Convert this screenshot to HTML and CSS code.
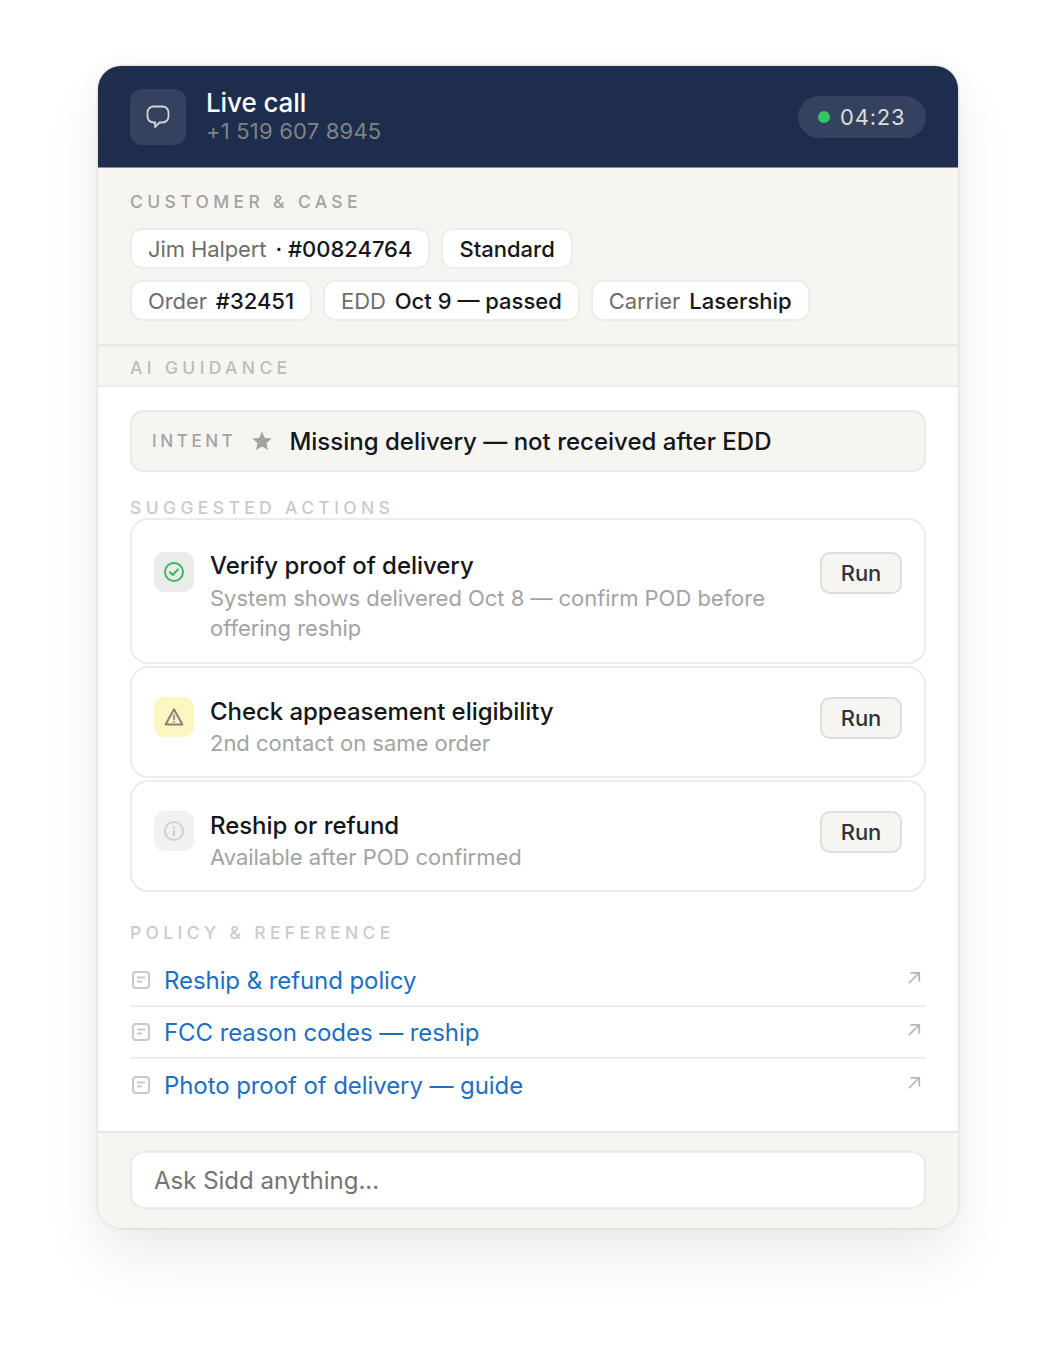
FILE: index.html
```html
<!DOCTYPE html>
<html>
<head>
    <title>Live call</title>
    <link rel="stylesheet" href="styles.css">
</head>
<body>
    <div class="card">
        <div class="header">
            <div class="header-icon">
                <svg width="26" height="26" viewBox="0 0 26 26" fill="none" stroke="#d4d4d0" stroke-width="1.8" stroke-linejoin="round"><path d="M8.5 2.5h9a6 6 0 0 1 6 6v4a6 6 0 0 1-6 6h-3l-4.5 4.5.2-4.5H8.5a6 6 0 0 1-6-6v-4a6 6 0 0 1 6-6z"/></svg>
            </div>
            <div class="header-text">
                <div class="header-title">Live call</div>
                <div class="header-phone">+1 519 607 8945</div>
            </div>
            <div class="timer"><span class="timer-dot"></span>04:23</div>
        </div>

        <div class="customer">
            <div class="label label-dark">CUSTOMER &amp; CASE</div>
            <div class="chips">
                <div class="chip"><span class="muted">Jim Halpert</span><b>· #00824764</b></div>
                <div class="chip"><b>Standard</b></div>
            </div>
            <div class="chips">
                <div class="chip"><span class="muted">Order</span><b>#32451</b></div>
                <div class="chip"><span class="muted">EDD</span><b>Oct 9 — passed</b></div>
                <div class="chip"><span class="muted">Carrier</span><b>Lasership</b></div>
            </div>
        </div>

        <div class="guidance-strip">
            <div class="label label-mid">AI GUIDANCE</div>
        </div>

        <div class="main">
            <div class="intent">
                <span class="intent-label">INTENT</span>
                <svg class="intent-star" width="22" height="22" viewBox="0 0 22 22" fill="#a3a3a0"><path d="M11 1.5l2.8 6.4 6.9.7-5.2 4.6 1.5 6.8L11 16.5l-6 3.5 1.5-6.8L1.3 8.6l6.9-.7z"/></svg>
                <span class="intent-text">Missing delivery — not received after EDD</span>
            </div>

            <div class="label label-light actions-label">SUGGESTED ACTIONS</div>
            <div class="action action-first">
                <div class="action-icon icon-green">
                    <svg width="22" height="22" viewBox="0 0 22 22" fill="none" stroke="#34b864" stroke-width="2" stroke-linecap="round" stroke-linejoin="round"><circle cx="11" cy="11" r="9"/><path d="M7 11.3l2.8 2.7L15 8.4"/></svg>
                </div>
                <div class="action-text">
                    <div class="action-title">Verify proof of delivery</div>
                    <div class="action-sub">System shows delivered Oct 8 — confirm POD before offering reship</div>
                </div>
                <div class="run">Run</div>
            </div>
            <div class="action">
                <div class="action-icon icon-yellow">
                    <svg width="22" height="22" viewBox="0 0 22 22" fill="none" stroke="#84827a" stroke-width="2" stroke-linejoin="round"><path d="M11 3.2L19.4 18.6H2.6z"/><path d="M11 8.5v5.4M11 15v1.6" stroke-width="1.6"/></svg>
                </div>
                <div class="action-text">
                    <div class="action-title">Check appeasement eligibility</div>
                    <div class="action-sub">2nd contact on same order</div>
                </div>
                <div class="run">Run</div>
            </div>
            <div class="action">
                <div class="action-icon icon-grey">
                    <svg width="22" height="22" viewBox="0 0 22 22" fill="none" stroke="#cfd0d0" stroke-width="2"><circle cx="11" cy="11" r="9"/><path d="M11 10v6M11 6.4v2" stroke="#c4c5c5" stroke-width="1.7"/></svg>
                </div>
                <div class="action-text">
                    <div class="action-title">Reship or refund</div>
                    <div class="action-sub">Available after POD confirmed</div>
                </div>
                <div class="run">Run</div>
            </div>

            <div class="label label-light policy-label">POLICY &amp; REFERENCE</div>
            <div class="links">
                <div class="link">
                    <svg class="link-doc" width="20" height="20" viewBox="0 0 20 20" fill="none" stroke="#c9c9c9" stroke-width="2"><rect x="2" y="2" width="16" height="16" rx="3"/><path d="M6 7.5h8M6 11.5h5"/></svg>
                    <span class="link-text">Reship &amp; refund policy</span>
                    <svg class="link-arrow" width="14" height="14" viewBox="0 0 16 16" fill="none" stroke="#b5b5b5" stroke-width="2"><path d="M2 14L14 2M4 2h10v10"/></svg>
                </div>
                <div class="link">
                    <svg class="link-doc" width="20" height="20" viewBox="0 0 20 20" fill="none" stroke="#c9c9c9" stroke-width="2"><rect x="2" y="2" width="16" height="16" rx="3"/><path d="M6 7.5h8M6 11.5h5"/></svg>
                    <span class="link-text">FCC reason codes — reship</span>
                    <svg class="link-arrow" width="14" height="14" viewBox="0 0 16 16" fill="none" stroke="#b5b5b5" stroke-width="2"><path d="M2 14L14 2M4 2h10v10"/></svg>
                </div>
                <div class="link">
                    <svg class="link-doc" width="20" height="20" viewBox="0 0 20 20" fill="none" stroke="#c9c9c9" stroke-width="2"><rect x="2" y="2" width="16" height="16" rx="3"/><path d="M6 7.5h8M6 11.5h5"/></svg>
                    <span class="link-text">Photo proof of delivery — guide</span>
                    <svg class="link-arrow" width="14" height="14" viewBox="0 0 16 16" fill="none" stroke="#b5b5b5" stroke-width="2"><path d="M2 14L14 2M4 2h10v10"/></svg>
                </div>
            </div>
        </div>

        <div class="footer">
            <div class="ask">Ask Sidd anything...</div>
        </div>
    </div>
</body>
</html>
```

FILE: styles.css
```css
html, body { margin: 0; background: #fff; }
body { font-family: "Inter", sans-serif; color: #14161a; padding: 65px 97px 0; height: 1293px; overflow: hidden; }
.card { width: 862px; box-sizing: border-box; border: 1px solid #e2e2df; border-radius: 24px; overflow: hidden; background: #fff; height: 1164px; }
.card { box-shadow: 0 0 0 1px rgba(0,0,0,0.02), 0 30px 60px rgba(0,0,0,0.07), 0 0 24px rgba(0,0,0,0.04); }

.header { background: #1e2d4d; height: 101px; display: flex; align-items: center; padding: 0 32px; border-bottom: 1px solid #8a8f9a; }
.header-icon { width: 56px; height: 56px; border-radius: 12px; background: #35425f; display: flex; align-items: center; justify-content: center; margin-right: 20px; }
.header-text { flex: 1; padding-bottom: 2px; }
.header-title { font-size: 26px; line-height: 30px; color: #fff; font-weight: 500; letter-spacing: -0.1px; }
.header-phone { font-size: 22px; line-height: 26px; letter-spacing: 0.2px; color: #7f8386; }
.timer { display: flex; align-items: center; height: 42px; width: 128px; box-sizing: border-box; padding: 1px 0 0 20px; border-radius: 21px; background: #35425f; color: #dcdcd8; font-size: 22px; letter-spacing: 0.8px; }
.timer-dot { width: 12px; height: 12px; border-radius: 50%; background: #34c464; margin-right: 10px; }

.label { font-size: 17.5px; font-weight: 500; letter-spacing: 4.35px; line-height: 22px; }
.label-dark { color: #a3a3a0; }
.label-mid { color: #bcbcb9; }
.label-light { color: #c9cbcb; }

.customer { background: #f6f5f2; height: 179px; box-sizing: border-box; padding: 23px 32px 0; border-bottom: 3px solid #e9e9e6; }
.chips { display: flex; gap: 11px; margin-top: 11px; }
.label + .chips { margin-top: 15px; }
.chip { height: 41px; box-sizing: border-box; display: flex; align-items: center; gap: 9px; padding: 1px 16px 0; background: #fff; border: 2px solid #ecece9; border-radius: 12px; font-size: 22px; white-space: pre; }
.chip b { font-weight: 500; color: #14161a; }
.muted { color: #6d6d6d; letter-spacing: -0.1px; }

.guidance-strip { background: #f6f5f2; height: 40px; box-sizing: border-box; padding: 10px 32px 0; border-bottom: 2px solid #ecece9; }

.main { padding: 23px 32px 0; height: 744px; box-sizing: border-box; }
.intent { height: 62px; box-sizing: border-box; display: flex; align-items: center; padding: 0 20px; background: #f6f5f2; border: 2px solid #e9e9e6; border-radius: 14px; }
.intent-label { font-size: 17px; font-weight: 500; letter-spacing: 3.6px; color: #a3a3a0; }
.intent-star { margin: 0 16px 0 15px; }
.intent-text { font-size: 24px; font-weight: 500; }

.actions-label { margin: 25px 0 -1px; }
.action { display: flex; align-items: flex-start; box-sizing: border-box; border: 2px solid #ecece9; border-radius: 18px; padding: 29px 22px 18px; margin-bottom: 2px; background: #fff; }
.action-first { padding-top: 32px; padding-bottom: 19px; }
.action-icon { width: 40px; height: 40px; border-radius: 10px; display: flex; align-items: center; justify-content: center; margin-right: 16px; flex: none; }
.icon-green { background: #ebecea; }
.icon-yellow { background: #fdf6c1; }
.icon-grey { background: #f1f1f0; }
.action-text { flex: 1; margin-top: -1px; padding-right: 20px; }
.action-first .action-text { margin-top: -2px; }
.action-title { font-size: 24px; line-height: 32px; font-weight: 500; letter-spacing: -0.05px; }
.action-sub { font-size: 22px; line-height: 30px; color: #a3a3a3; letter-spacing: -0.03px; }
.action-first .action-sub { margin-top: 1px; }
.run { width: 82px; height: 42px; box-sizing: border-box; display: flex; align-items: center; justify-content: center; border: 2px solid #ddddda; border-radius: 10px; background: #f6f5f2; font-size: 22px; font-weight: 500; color: #2f3338; }

.policy-label { margin-top: 30px; }
.links { margin-top: 11px; }
.link { height: 52px; box-sizing: border-box; display: flex; align-items: center; gap: 13px; border-bottom: 2px solid #ededeb; }
.link:last-child { border-bottom: 0; }
.link-doc { margin-left: 1px; }
.link-text { flex: 1; font-size: 24px; letter-spacing: -0.08px; color: #1d6fc2; }
.link-arrow { margin: 0 5px 5px 0; }

.footer { background: #f6f5f2; height: 97px; box-sizing: border-box; padding: 18px 32px 0; border-top: 2px solid #e6e6e3; }
.ask { height: 58px; box-sizing: border-box; display: flex; align-items: center; padding: 1px 22px 0; background: #fff; border: 2px solid #e9e9e6; border-radius: 14px; font-size: 24px; color: #757371; }
```
